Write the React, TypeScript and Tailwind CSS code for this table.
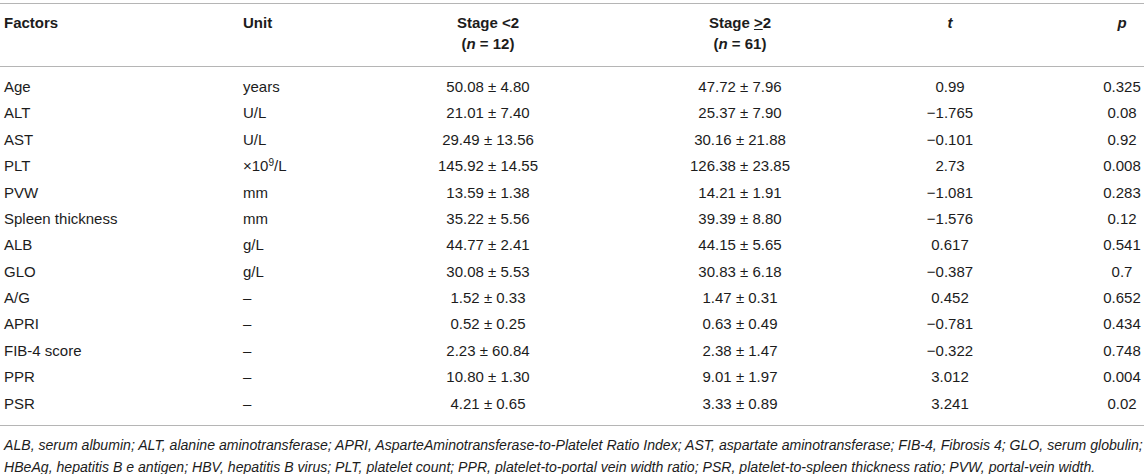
import React from 'react';

// Row data for the factor table
interface FactorRow {
  factor: string;
  unit: React.ReactNode;
  low: string;
  high: string;
  t: string;
  p: string;
}

const rows: FactorRow[] = [
  { factor: 'Age', unit: 'years', low: '50.08 ± 4.80', high: '47.72 ± 7.96', t: '0.99', p: '0.325' },
  { factor: 'ALT', unit: 'U/L', low: '21.01 ± 7.40', high: '25.37 ± 7.90', t: '−1.765', p: '0.08' },
  { factor: 'AST', unit: 'U/L', low: '29.49 ± 13.56', high: '30.16 ± 21.88', t: '−0.101', p: '0.92' },
  {
    factor: 'PLT',
    unit: (
      <>
        ×10<sup className="text-[10px]">9</sup>/L
      </>
    ),
    low: '145.92 ± 14.55',
    high: '126.38 ± 23.85',
    t: '2.73',
    p: '0.008',
  },
  { factor: 'PVW', unit: 'mm', low: '13.59 ± 1.38', high: '14.21 ± 1.91', t: '−1.081', p: '0.283' },
  { factor: 'Spleen thickness', unit: 'mm', low: '35.22 ± 5.56', high: '39.39 ± 8.80', t: '−1.576', p: '0.12' },
  { factor: 'ALB', unit: 'g/L', low: '44.77 ± 2.41', high: '44.15 ± 5.65', t: '0.617', p: '0.541' },
  { factor: 'GLO', unit: 'g/L', low: '30.08 ± 5.53', high: '30.83 ± 6.18', t: '−0.387', p: '0.7' },
  { factor: 'A/G', unit: '–', low: '1.52 ± 0.33', high: '1.47 ± 0.31', t: '0.452', p: '0.652' },
  { factor: 'APRI', unit: '–', low: '0.52 ± 0.25', high: '0.63 ± 0.49', t: '−0.781', p: '0.434' },
  { factor: 'FIB-4 score', unit: '–', low: '2.23 ± 60.84', high: '2.38 ± 1.47', t: '−0.322', p: '0.748' },
  { factor: 'PPR', unit: '–', low: '10.80 ± 1.30', high: '9.01 ± 1.97', t: '3.012', p: '0.004' },
  { factor: 'PSR', unit: '–', low: '4.21 ± 0.65', high: '3.33 ± 0.89', t: '3.241', p: '0.02' },
];

const cols = 'grid grid-cols-[243px_120px_250px_254px_166px_1fr]';

export default function App() {
  return (
    <div className="w-[1144px] h-[474px] bg-white text-[#1c1c1c] text-[15px] font-['Liberation_Sans',Arial,sans-serif] overflow-hidden">
      {/* Header */}
      <div className={`${cols} mt-[3px] border-t border-b border-[#b5b5b5] pt-[8px] pb-[12px] font-bold leading-[21px]`}>
        <div className="pl-[4px]">Factors</div>
        <div>Unit</div>
        <div className="text-center">
          Stage &lt;2
          <br />(<i>n</i> = 12)
        </div>
        <div className="text-center">
          Stage <span className="underline underline-offset-[1px]">&gt;</span>2
          <br />(<i>n</i> = 61)
        </div>
        <div className="text-center italic">t</div>
        <div className="text-center italic pl-[67px]">p</div>
      </div>

      {/* Body */}
      <div className="border-b border-[#b5b5b5] pt-[7px] pb-[8px]">
        {rows.map((r, i) => (
          <div key={i} className={`${cols} h-[26.4px] items-center`}>
            <div className="pl-[4px]">{r.factor}</div>
            <div>{r.unit}</div>
            <div className="text-center">{r.low}</div>
            <div className="text-center">{r.high}</div>
            <div className="text-center">{r.t}</div>
            <div className="text-center pl-[67px]">{r.p}</div>
          </div>
        ))}
      </div>

      {/* Footnote */}
      <p className="italic text-[14.1px] pl-[4px] pt-[8px] leading-[22px] whitespace-nowrap">
        ALB, serum albumin; ALT, alanine aminotransferase; APRI, AsparteAminotransferase-to-Platelet Ratio Index; AST, aspartate aminotransferase; FIB-4, Fibrosis 4; GLO, serum globulin;
        <br />
        HBeAg, hepatitis B e antigen; HBV, hepatitis B virus; PLT, platelet count; PPR, platelet-to-portal vein width ratio; PSR, platelet-to-spleen thickness ratio; PVW, portal-vein width.
      </p>
    </div>
  );
}
